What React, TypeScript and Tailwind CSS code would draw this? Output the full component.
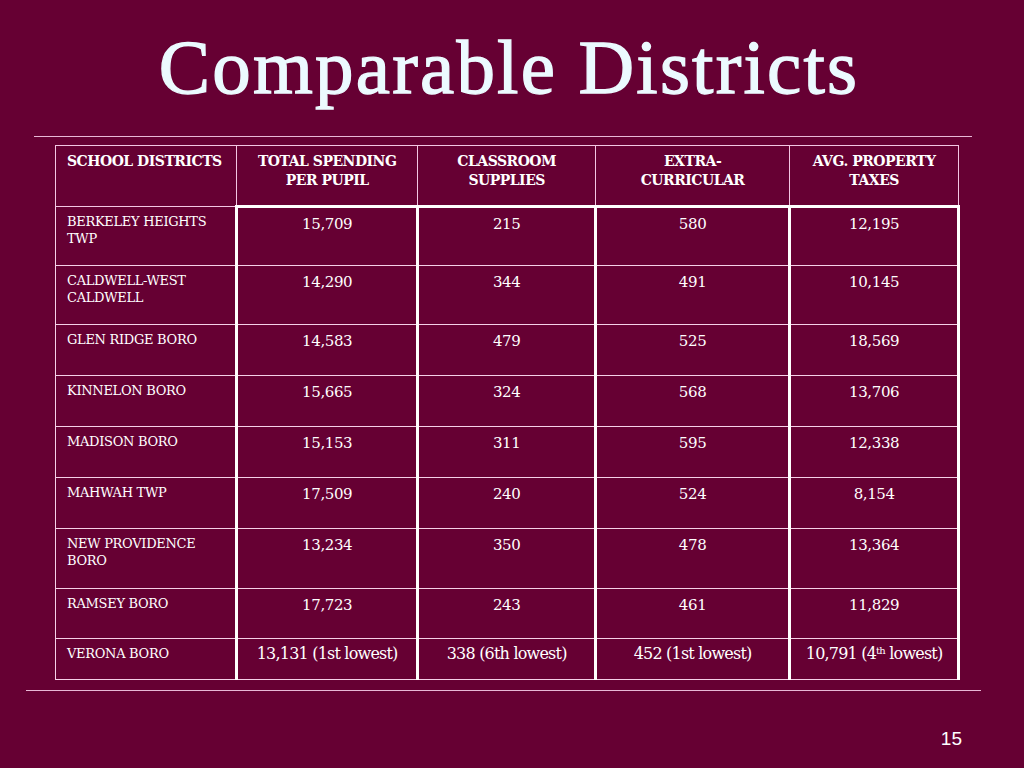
const rows: [string, string, string, string, string, number][] = [
  ['BERKELEY HEIGHTS TWP', '15,709', '215', '580', '12,195', 59],
  ['CALDWELL-WEST CALDWELL', '14,290', '344', '491', '10,145', 59],
  ['GLEN RIDGE BORO', '14,583', '479', '525', '18,569', 51],
  ['KINNELON BORO', '15,665', '324', '568', '13,706', 51],
  ['MADISON BORO', '15,153', '311', '595', '12,338', 51],
  ['MAHWAH TWP', '17,509', '240', '524', '8,154', 51],
  ['NEW PROVIDENCE BORO', '13,234', '350', '478', '13,364', 60],
  ['RAMSEY BORO', '17,723', '243', '461', '11,829', 50],
];

const headers = ['TOTAL SPENDING PER PUPIL', 'CLASSROOM SUPPLIES', 'EXTRA-\nCURRICULAR', 'AVG. PROPERTY TAXES'];

const serif = { fontFamily: '"DejaVu Serif", "Liberation Serif", serif' };

const lastCell =
  'border-y border-y-[#f6d0e8] border-x-[3px] border-x-white align-top text-center pt-[4px] text-[16px] leading-[22px] tracking-[-0.8px] whitespace-nowrap';

export default function App() {
  return (
    <div className="w-[1024px] h-[768px] bg-[#660033] flex flex-col overflow-hidden">
      <h1
        className="text-[#ecfaff] text-[77px] font-normal text-center pt-[22px] h-[136px] leading-[90px] pr-[6px] tracking-[2.2px] [-webkit-text-stroke:1.3px_#ecfaff]"
        style={{ fontFamily: '"Liberation Serif", serif' }}
      >
        Comparable Districts
      </h1>
      <div className="ml-[34px] w-[938px] h-px bg-[#e8b8d6]" />

      <table className="ml-[55px] mt-[8px] w-[905px] border-collapse text-white" style={serif}>
        <colgroup>
          <col className="w-[181px]" />
          <col className="w-[182px]" />
          <col className="w-[178px]" />
          <col className="w-[195px]" />
          <col className="w-[169px]" />
        </colgroup>
        <thead>
          <tr className="h-[61px]">
            <th className="border border-[#f3c6e3] align-top text-left pl-[11px] pt-[6px] text-[14px] font-bold leading-[19px] tracking-[-0.5px] whitespace-nowrap">
              SCHOOL DISTRICTS
            </th>
            {headers.map((h) => (
              <th
                key={h}
                className="border border-[#f3c6e3] border-b-[3px] border-b-white align-top text-center px-3 pt-[6px] text-[14px] font-bold leading-[19px] tracking-[-0.5px] whitespace-pre-line"
              >
                {h}
              </th>
            ))}
          </tr>
        </thead>
        <tbody>
          {rows.map(([name, a, b, c, d, h]) => (
            <tr key={name} style={{ height: h }}>
              <td className="border border-[#f6d0e8] border-t-white border-r-[3px] border-r-white align-top pl-[11px] pr-2 pt-[6px] text-[13px] leading-[17px] tracking-[-0.3px]">
                {name}
              </td>
              {[a, b, c, d].map((v, i) => (
                <td
                  key={i}
                  className="border-y border-y-[#f6d0e8] border-x-[3px] border-x-white align-top text-center pt-[6px] text-[15px] leading-[20px] tracking-[-0.4px]"
                >
                  {v}
                </td>
              ))}
            </tr>
          ))}
          <tr className="h-[41px]">
            <td className="border border-[#f6d0e8] border-r-[3px] border-r-white align-top pl-[11px] pt-[6px] text-[13px] leading-[17px] tracking-[-0.3px]">
              VERONA BORO
            </td>
            <td className={lastCell}>13,131 (1st lowest)</td>
            <td className={lastCell}>338 (6th lowest)</td>
            <td className={lastCell}>452 (1st lowest)</td>
            <td className={lastCell}>
              10,791 (4<sup className="text-[10px]">th</sup> lowest)
            </td>
          </tr>
        </tbody>
      </table>

      <div className="ml-[26px] mt-[10px] w-[955px] h-px bg-[#e8b8d6]" />
      <div
        className="self-end mr-[62px] mt-[34px] text-white text-[19px]"
        style={{ fontFamily: '"Liberation Sans", sans-serif' }}
      >
        15
      </div>
    </div>
  );
}
